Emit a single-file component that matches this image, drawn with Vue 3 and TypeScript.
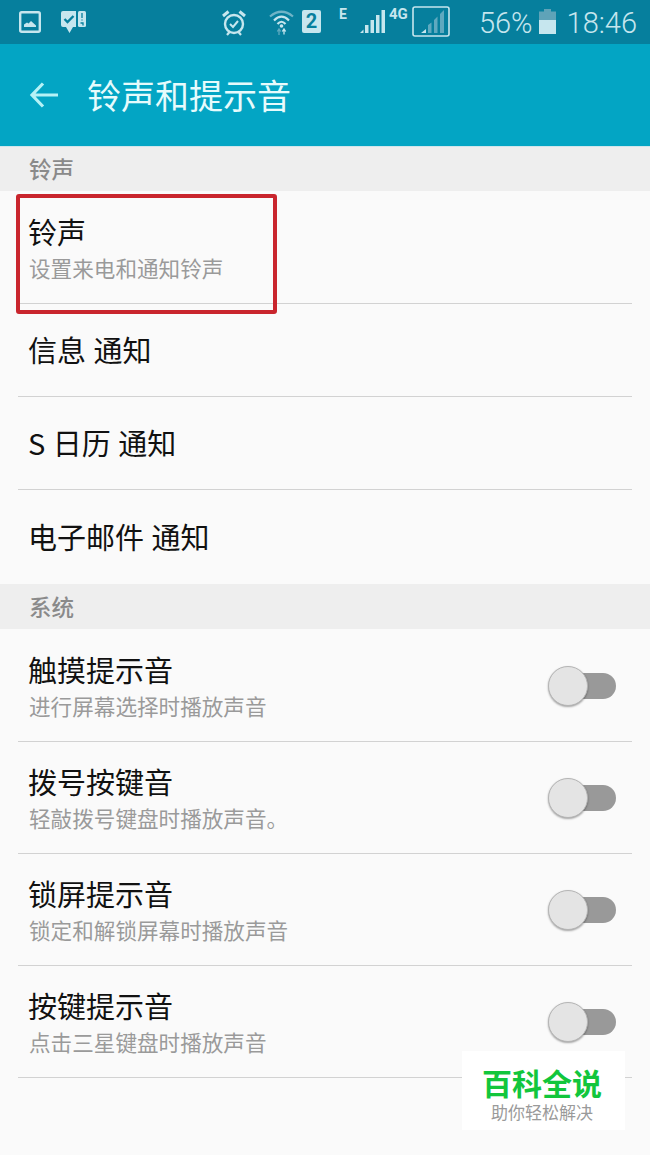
<template>
  <div class="page">
    <div class="status-bar">
      <div class="status-left">
        <svg class="ic-image" width="22" height="22" viewBox="0 0 22 22">
          <rect x="1.2" y="1.2" width="19.6" height="19.6" rx="1.5" fill="none" stroke="#c6e6ee" stroke-width="2.4" />
          <path d="M5 16v-2.5l3-2 1.5 1 2.5-2.5 5 4.5V16z" fill="#c6e6ee" />
        </svg>
        <svg class="ic-todo" width="25" height="23" viewBox="0 0 25 23">
          <path d="M0 2Q0 0 2 0H15v16h-3l-3.500 6-3.500-6H2Q0 16 0 14z" fill="#c6e6ee" />
          <path d="M3.500 8l3 3 6-6" fill="none" stroke="#067f9d" stroke-width="2.400" />
          <rect x="17" y="0" width="8" height="16" rx="1.500" fill="#c6e6ee" />
          <path d="M21 2v5M21 8.500v1M19.500 12h2.500v2.500" fill="none" stroke="#067f9d" stroke-width="1.300" />
        </svg>
      </div>
      <div class="status-right">
        <svg class="ic-alarm" width="24" height="27" viewBox="0 0 24 27">
          <circle cx="12" cy="15" r="9" fill="none" stroke="#c6e6ee" stroke-width="2.400" />
          <path d="M8 15l3 3 5-6" fill="none" stroke="#c6e6ee" stroke-width="2" />
          <path d="M1 7l5.500-4.500M23 7l-5.500-4.500" stroke="#c6e6ee" stroke-width="3" />
          <path d="M5 26l2.500-3M19 26l-2.500-3" stroke="#c6e6ee" stroke-width="2.200" />
        </svg>
        <svg class="ic-wifi" width="25" height="26" viewBox="0 0 25 26">
          <path d="M1 7.500Q12.500-2 24 7.500" fill="none" stroke="#6fb4c7" stroke-width="2.200" />
          <path d="M5 11.500Q12.500 4 20 11.500" fill="none" stroke="#c6e6ee" stroke-width="2.200" />
          <path d="M8.500 15Q12.500 10.500 16.500 15" fill="none" stroke="#c6e6ee" stroke-width="2.200" />
          <circle cx="12.500" cy="17" r="1.800" fill="#c6e6ee" />
          <path d="M10 26v-5M8.300 22.500L10 20l1.700 2.500" fill="none" stroke="#5fa9bf" stroke-width="1.300" />
          <path d="M15 20v5.500M13.300 22.500L15 20l1.700 2.500" fill="none" stroke="#c6e6ee" stroke-width="1.300" />
        </svg>
        <span class="sim">2</span>
        <span class="net-e">E</span>
        <svg class="ic-signal" width="25" height="23" viewBox="0 0 25 23">
          <path d="M0 23l3.500-3.500V23z" fill="#c6e6ee" />
          <rect x="5" y="15" width="3.500" height="8" fill="#c6e6ee" />
          <rect x="10.500" y="10" width="3.500" height="13" fill="#c6e6ee" />
          <rect x="16" y="5" width="3.500" height="18" fill="#c6e6ee" />
          <rect x="21.500" y="0" width="3.500" height="23" fill="#c6e6ee" />
        </svg>
        <span class="net-4g">4G</span>
        <svg class="ic-signal-box" width="38" height="31" viewBox="0 0 38 31">
          <rect x="1" y="1" width="36" height="29" rx="2" fill="none" stroke="#c6e6ee" stroke-width="1.600" />
          <path d="M9 27l5-4v4z" fill="#c6e6ee" />
          <path d="M16 27v-8l3.500-2.500V27zM22 27V14l3.500-3.500V27zM28 27V8l4-4v23z" fill="#5fa9bf" />
        </svg>
        <span class="pct">56%</span>
        <svg class="ic-battery" width="17" height="25" viewBox="0 0 17 25">
          <path d="M5 0h7v2.500h5V11H0V2.500h5z" fill="#5fa3b8" />
          <rect y="11" width="17" height="14" fill="#c6e6ee" />
        </svg>
        <span class="clock">18:46</span>
      </div>
    </div>

    <div class="app-bar">
      <svg class="back" width="30" height="28" viewBox="0 0 30 28">
        <path d="M29 14H3M14 2.500L3 14l11 11.500" fill="none" stroke="#b5f2f6" stroke-width="3.200" />
      </svg>
      <span class="title">铃声和提示音</span>
    </div>

    <template v-for="(group, g) in groups" :key="group.name">
      <div class="section" :class="{ wide: g > 0 }">{{ group.name }}</div>
      <div
        v-for="(row, i) in group.rows"
        :key="row.title"
        class="row"
        :class="{ tall: row.sub, first: i === 0, last: row.noLine }"
      >
        <div class="row-text">
          <div class="row-title">{{ row.title }}</div>
          <div v-if="row.sub" class="row-sub">{{ row.sub }}</div>
        </div>
        <div v-if="row.toggle" class="switch"><span class="knob"></span></div>
        <div v-if="row.marked" class="mark"></div>
      </div>
    </template>

    <div class="badge">
      <div class="badge-main">百科全说</div>
      <div class="badge-sub">助你轻松解决</div>
    </div>
  </div>
</template>

<script setup lang="ts">
interface Row {
  title: string
  sub?: string
  toggle?: boolean
  marked?: boolean
  noLine?: boolean
}

const groups: { name: string; rows: Row[] }[] = [
  {
    name: '铃声',
    rows: [
      { title: '铃声', sub: '设置来电和通知铃声', marked: true },
      { title: '信息 通知' },
      { title: 'S 日历 通知' },
      { title: '电子邮件 通知', noLine: true }
    ]
  },
  {
    name: '系统',
    rows: [
      { title: '触摸提示音', sub: '进行屏幕选择时播放声音', toggle: true },
      { title: '拨号按键音', sub: '轻敲拨号键盘时播放声音。', toggle: true },
      { title: '锁屏提示音', sub: '锁定和解锁屏幕时播放声音', toggle: true },
      { title: '按键提示音', sub: '点击三星键盘时播放声音', toggle: true }
    ]
  }
]
</script>

<style>
body {
  background: #fafafa;
}
</style>

<style scoped>
.page {
  position: relative;
  width: 650px;
  height: 1155px;
  overflow: hidden;
  background: #fafafa;
  font-family: "Noto Sans CJK SC", "Roboto", sans-serif;
}

.status-bar {
  height: 44px;
  background: #067f9d;
  display: flex;
  justify-content: space-between;
  color: #c6e6ee;
  box-sizing: border-box;
  padding: 0 13px 0 19px;
}
.status-left,
.status-right {
  display: flex;
  align-items: flex-start;
}
.ic-image {
  margin-top: 11px;
}
.ic-todo {
  margin: 11px 0 0 20px;
}
.ic-alarm {
  margin-top: 9px;
}
.ic-wifi {
  margin: 9px 0 0 23px;
}
.sim {
  width: 19px;
  height: 23px;
  margin: 10px 0 0 8px;
  background: #c6e6ee;
  color: #067f9d;
  border-radius: 2px;
  font: 700 20px/23px "Roboto", sans-serif;
  text-align: center;
}
.net-e {
  margin: 7px 0 0 18px;
  width: 8px;
  font: 700 14px/14px "Roboto", sans-serif;
}
.ic-signal {
  margin: 10px 0 0 13px;
}
.net-4g {
  margin: 7px 0 0 4px;
  width: 20px;
  font: 700 15px/14px "Roboto", sans-serif;
}
.ic-signal-box {
  margin: 6px 0 0 3px;
}
.pct {
  margin-left: 29px;
  font: 300 29px/46px "Roboto", sans-serif;
}
.ic-battery {
  margin: 9px 0 0 6px;
}
.clock {
  margin-left: 11px;
  font: 300 29px/46px "Roboto", sans-serif;
}

.app-bar {
  height: 100px;
  background: #03a5c4;
  border-bottom: 1px solid #cfe6ec;
  display: flex;
  align-items: center;
  padding: 0 0 2px 29px;
}
.back {
  margin: 2px 28px 0 0;
}
.title {
  font-size: 34px;
  color: #e6fbfc;
}

.section {
  height: 44px;
  background: #eeeeee;
  padding-left: 29px;
  font-size: 22.500px;
  line-height: 42px;
  font-weight: 500;
  color: #8a8a8a;
}
.section.wide {
  height: 45px;
  line-height: 45px;
}

.row {
  position: relative;
  height: 93px;
  margin: 0 18px;
  padding: 0 16px 2px 11px;
  display: flex;
  align-items: center;
  justify-content: space-between;
  border-bottom: 1px solid #d2d2d2;
  box-sizing: border-box;
}
.row.tall {
  height: 112px;
  padding-bottom: 0;
  align-items: flex-start;
}
.row.tall.first {
  height: 113px;
}
.row.last {
  height: 94px;
  border-bottom: none;
}
.row-title {
  margin-left: -1px;
  font-size: 29px;
  line-height: 40px;
  word-spacing: 1px;
  color: #111111;
}
.tall .row-text {
  padding-top: 19px;
}
.tall.first .row-text {
  padding-top: 20px;
}
.row-sub {
  font-size: 21.600px;
  line-height: 32px;
  margin-top: 1px;
  color: #9a9a9a;
}

.switch {
  position: relative;
  align-self: center;
  width: 45px;
  height: 26px;
  margin-top: 1px;
  background: #999999;
  border-radius: 13px;
}
.knob {
  position: absolute;
  left: -23px;
  top: -7px;
  width: 40px;
  height: 40px;
  box-sizing: border-box;
  border-radius: 50%;
  background: #e4e4e4;
  border: 1px solid #b5b5b5;
  box-shadow: 0 1px 2px rgba(0, 0, 0, 0.35);
}

.mark {
  position: absolute;
  left: -2px;
  top: 3px;
  width: 261px;
  height: 120px;
  box-sizing: border-box;
  border: 4px solid #c9252d;
  border-radius: 3px;
}

.badge {
  position: absolute;
  left: 462px;
  top: 1051px;
  width: 163px;
  height: 79px;
  box-sizing: border-box;
  padding: 15px 3px 0 0;
  background: #ffffff;
  text-align: center;
}
.badge-main {
  font-size: 30px;
  line-height: 32px;
  font-weight: 700;
  color: #12c63c;
}
.badge-sub {
  margin-top: 2px;
  font-size: 17px;
  line-height: 24px;
  color: #9a9a9a;
}
</style>
